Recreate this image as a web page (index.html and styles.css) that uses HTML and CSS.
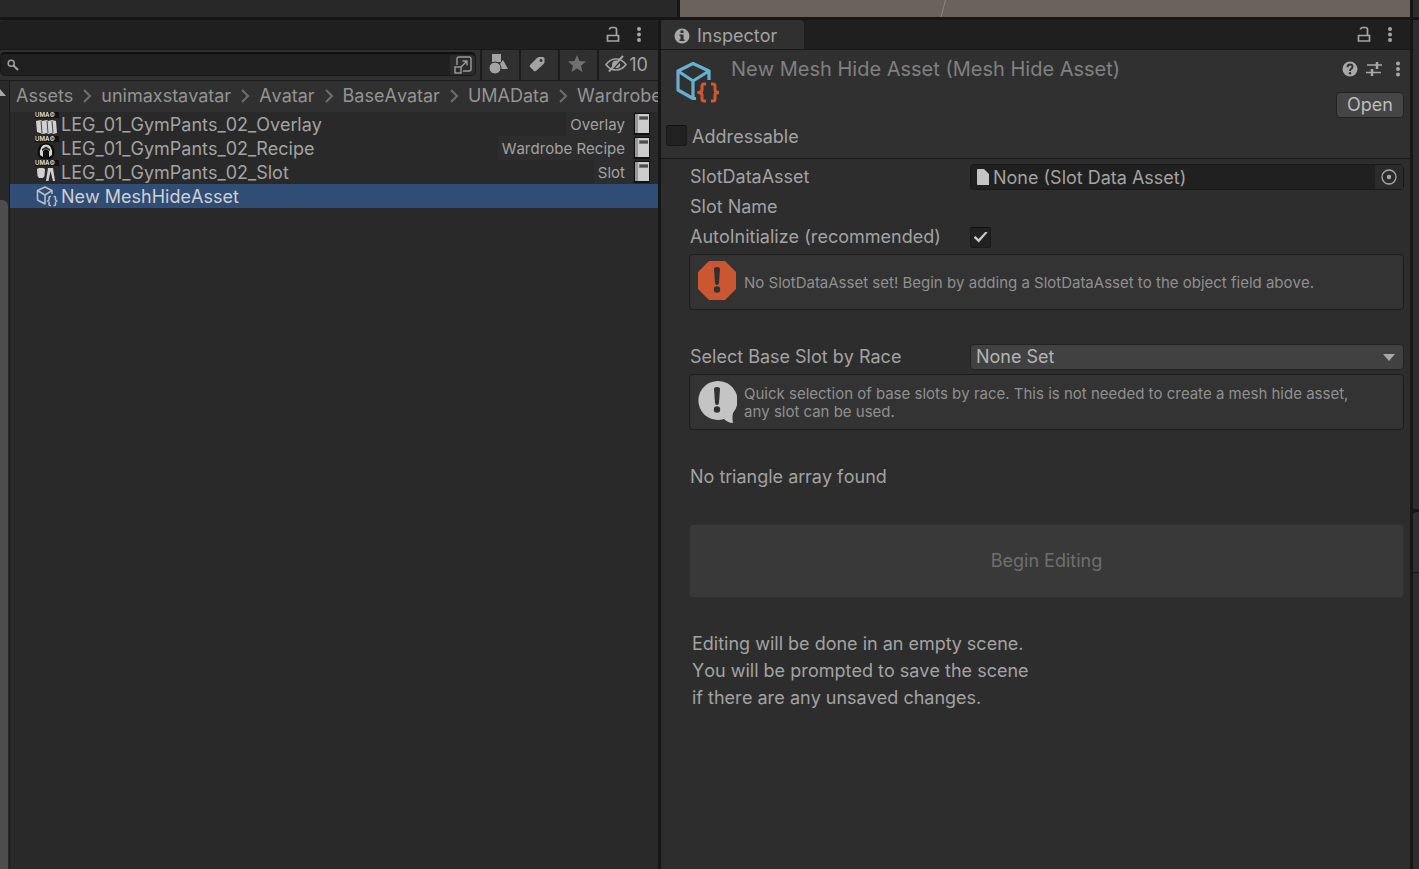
FILE: index.html
```
<!DOCTYPE html>
<html lang="en">
<head>
    <meta charset="UTF-8">
    <meta name="viewport" content="width=device-width, initial-scale=1.0">
    <title>Inspector</title>
    <link rel="stylesheet" href="styles.css">
</head>
<body>
    <div class="editor">
        <!-- Bottom edge of the panels above -->
        <div class="top-strip">
            <div class="top-left"></div>
            <div class="scene-view">
                <svg width="8" height="17" viewBox="0 0 8 17"><path d="M6.500 0L2 17" stroke="#8b8581" fill="none"/></svg>
            </div>
            <div class="top-right"></div>
        </div>

        <div class="panels">
            <!-- Project panel -->
            <section class="project">
                <div class="tab-bar">
                    <button class="icon-button" aria-label="Lock project">
                        <svg width="14" height="18" viewBox="0 0 14 18"><path d="M1.500 9.500h11v5.500h-11zM3.500 3.500V3Q4 1.500 6 1.500h2.500q2 0 2 2v6" fill="none" stroke="#a6a6a6" stroke-width="1.700"/></svg>
                    </button>
                    <button class="icon-button" aria-label="Project menu">
                        <svg width="6" height="18" viewBox="0 0 6 18" fill="#a6a6a6"><circle cx="3" cy="3" r="2"/><circle cx="3" cy="8.500" r="2"/><circle cx="3" cy="14" r="2"/></svg>
                    </button>
                </div>

                <div class="toolbar">
                    <div class="search">
                        <svg width="12" height="12" viewBox="0 0 12 12"><circle cx="4.200" cy="4.200" r="3" fill="none" stroke="#a0a0a0" stroke-width="1.500"/><path d="M6.500 6.500l4.500 4.500" stroke="#a0a0a0" stroke-width="2"/></svg>
                        <input type="text" aria-label="Search assets">
                        <button class="search-open" aria-label="Open in search window">
                            <svg width="18" height="18" viewBox="0 0 18 18" fill="none" stroke="#9c9c9c" stroke-width="1.400"><path d="M3 9V3q0-2 2-2h10q2 0 2 2v10q0 2-2 2H9"/><rect x="1" y="11" width="6" height="6"/><path d="M7 11l6-6M8.500 5H13v4.500"/></svg>
                        </button>
                    </div>
                    <button class="tool" aria-label="Search by type">
                        <svg width="20" height="20" viewBox="0 0 20 20" fill="#a3a3a3"><path d="M3 0h9v8H3zM14 6l5 9h-7l-2-4z"/><circle cx="6" cy="14" r="6" stroke="#2f2f2f"/></svg>
                    </button>
                    <button class="tool" aria-label="Search by label">
                        <svg width="18" height="18" viewBox="0 0 18 18" fill="#a3a3a3"><path fill-rule="evenodd" d="M1 10L8 3q1-1 3-1h3q1.500 0 1.500 1.500V7q0 1-1 2L7 16q-1 .700-2 0L1 12q-.700-1 0-2zM12 4a1.500 1.500 0 1 0 .1 0z"/></svg>
                    </button>
                    <button class="tool" aria-label="Favorites">
                        <svg width="20" height="20" viewBox="0 0 20 20" fill="#707070"><path d="M10 1l2.500 6 6.500.500-5 4.300 1.600 6.200-5.600-3.400L4.400 18 6 11.800 1 7.500 7.500 7z"/></svg>
                    </button>
                    <button class="tool hidden-count" aria-label="Hidden packages: 10">
                        <svg width="22" height="18" viewBox="0 0 22 18" fill="none" stroke="#a3a3a3" stroke-width="1.600"><path d="M1 9.500Q5 4 11 4t10 5.500Q17 15 11 15T1 9.500z"/><path d="M7 9a4 4 0 0 1 6-3l-6 6zM10 13l5-5q1 4-2 5z" fill="#a3a3a3" stroke="none"/><path d="M4 16.500L18 1" stroke-width="2"/></svg>
                        <span>10</span>
                    </button>
                </div>

                <div class="project-body">
                    <div class="tree-scroll">
                        <svg width="6" height="7" viewBox="0 0 6 7"><path d="M0 0l6 7H0z" fill="#a8a8a8"/></svg>
                        <div class="scroll-thumb"></div>
                    </div>
                    <div class="assets">
                        <nav class="breadcrumbs" aria-label="Folder">
                            <a href="#">Assets</a>
                            <svg width="10" height="14" viewBox="0 0 10 14"><path d="M2 1l6 6-6 6"/></svg>
                            <a href="#">unimaxstavatar</a>
                            <svg width="10" height="14" viewBox="0 0 10 14"><path d="M2 1l6 6-6 6"/></svg>
                            <a href="#">Avatar</a>
                            <svg width="10" height="14" viewBox="0 0 10 14"><path d="M2 1l6 6-6 6"/></svg>
                            <a href="#">BaseAvatar</a>
                            <svg width="10" height="14" viewBox="0 0 10 14"><path d="M2 1l6 6-6 6"/></svg>
                            <a href="#">UMAData</a>
                            <svg width="10" height="14" viewBox="0 0 10 14"><path d="M2 1l6 6-6 6"/></svg>
                            <a href="#">Wardrobe</a>
                        </nav>
                        <ul class="asset-list">
                            <li>
                                <svg width="24" height="24" viewBox="0 0 24 24"><rect width="24" height="6" fill="#111"/><text class="uma" x="0" y="5">UMA©</text><path d="M1 9l5-1 1 1 5-1 1 1 4-1 4 1 1 12-4 1-1-1-4 1-1-1-4 1-6-2z" fill="#d0d0d0"/><path d="M6 9l1 12M12 9l1 12M17 9l1 12" stroke="#444" fill="none"/></svg>
                                <span class="name">LEG_01_GymPants_02_Overlay</span>
                                <span class="type">Overlay</span>
                                <svg class="book" width="18" height="24" viewBox="0 0 18 24"><path d="M1 1h16v22H1z" fill="#111"/><path d="M2 2h3v19H2z" fill="#999"/><path d="M5 2h11v19H5z" fill="#ccc"/><path d="M6 4h9v4H6z" fill="#777"/><path d="M7 6h8" stroke="#222"/></svg>
                            </li>
                            <li>
                                <svg width="24" height="24" viewBox="0 0 24 24"><rect width="24" height="6" fill="#111"/><text class="uma" x="0" y="5">UMA©</text><path d="M3 20Q1 8 11 7q10 1 8 13l-3 3H6z" fill="#0c0c0c"/><path d="M5 19Q4 9 11 8.500 18 9 17 19l-3 2v-6l-3-2-3 2v6z" fill="#d5d5d5"/><path d="M7 13l4-2.500 4 2.500v2l-4-2-4 2z" fill="#333"/><path d="M9 16l2-1 2 1v6H9z" fill="#111"/></svg>
                                <span class="name">LEG_01_GymPants_02_Recipe</span>
                                <span class="type">Wardrobe Recipe</span>
                                <svg class="book" width="18" height="24" viewBox="0 0 18 24"><path d="M1 1h16v22H1z" fill="#111"/><path d="M2 2h3v19H2z" fill="#999"/><path d="M5 2h11v19H5z" fill="#ccc"/><path d="M6 4h9v4H6z" fill="#777"/><path d="M7 6h8" stroke="#222"/></svg>
                            </li>
                            <li>
                                <svg width="24" height="24" viewBox="0 0 24 24"><rect width="24" height="6" fill="#111"/><text class="uma" x="0" y="5">UMA©</text><path d="M2 9l2-1h4l2 1-.500 7-1.500 2H4l-1.500-2zM13 8h5l2 13h-2l-2.500-10L13.500 21H11z" fill="#d0d0d0"/></svg>
                                <span class="name">LEG_01_GymPants_02_Slot</span>
                                <span class="type">Slot</span>
                                <svg class="book" width="18" height="24" viewBox="0 0 18 24"><path d="M1 1h16v22H1z" fill="#111"/><path d="M2 2h3v19H2z" fill="#999"/><path d="M5 2h11v19H5z" fill="#ccc"/><path d="M6 4h9v4H6z" fill="#777"/><path d="M7 6h8" stroke="#222"/></svg>
                            </li>
                            <li class="selected">
                                <svg width="24" height="24" viewBox="0 0 24 24" fill="none" stroke="#b9c0cb" stroke-width="1.500" stroke-linejoin="round"><path d="M17 10V6.500L10 3 2.500 6.500v9.500l7.500 4v-9M2.500 6.500L10 11l7-4.500"/><path d="M16 12.500h-1q-1 0-1 1v2.500l-1.500 1 1.500 1v2.500q0 1 1 1h1M18.500 12.500h1q1 0 1 1v2.500l1.500 1-1.500 1v2.500q0 1-1 1h-1"/></svg>
                                <span class="name">New MeshHideAsset</span>
                            </li>
                        </ul>
                    </div>
                </div>
            </section>

            <!-- Inspector panel -->
            <section class="inspector">
                <div class="tab-bar">
                    <button class="tab">
                        <svg width="16" height="16" viewBox="0 0 16 16"><circle cx="8" cy="8" r="7.500" fill="#a8a8a8"/><path d="M6.500 2.500h3v2.500h-3zM5.500 6.500h4v5h1v1.500h-5v-1.500h1V8h-1z" fill="#2f2f2f"/></svg>
                        Inspector
                    </button>
                    <button class="icon-button" aria-label="Lock inspector">
                        <svg width="14" height="18" viewBox="0 0 14 18"><path d="M1.500 9.500h11v5.500h-11zM3.500 3.500V3Q4 1.500 6 1.500h2.500q2 0 2 2v6" fill="none" stroke="#a6a6a6" stroke-width="1.700"/></svg>
                    </button>
                    <button class="icon-button" aria-label="Inspector menu">
                        <svg width="6" height="18" viewBox="0 0 6 18" fill="#a6a6a6"><circle cx="3" cy="3" r="2"/><circle cx="3" cy="8.500" r="2"/><circle cx="3" cy="14" r="2"/></svg>
                    </button>
                </div>

                <header class="asset-header">
                    <div class="asset-title">
                        <svg width="44" height="46" viewBox="0 0 44 46" fill="none" stroke-linejoin="round"><path d="M34 23V14L18 6.500 3 14v19l15 8.500h3M18 41V24M3 14l15 10 16-10" stroke="#67b0d1" stroke-width="3.200"/><path d="M31 27h-2q-2 0-2 2v4q0 2-3.500 2.500 3.500.500 3.500 2.500V42q0 2 2 2h2M36 27h2q2 0 2 2v4q0 2 3.500 2.500-3.500.500-3.500 2.500V42q0 2-2 2h-2" stroke="#d0582f" stroke-width="3"/></svg>
                        <h1>New Mesh Hide Asset (Mesh Hide Asset)</h1>
                        <div class="header-actions">
                            <div class="header-icons">
                                <button class="icon-button" aria-label="Help">
                                    <svg width="16" height="16" viewBox="0 0 16 16"><circle cx="8" cy="8" r="7.500" fill="#a8a8a8"/><path d="M5.500 6.200q0-2.700 2.500-2.700t2.500 2.200Q10.500 7 9 8q-1 .700-1 2" fill="none" stroke="#2f2f2f" stroke-width="1.900"/><circle cx="8" cy="12.300" r="1.200" fill="#2f2f2f"/></svg>
                                </button>
                                <button class="icon-button" aria-label="Presets">
                                    <svg width="16" height="16" viewBox="0 0 16 16" fill="none" stroke="#a8a8a8"><path d="M1 4h9M12 4h4M0 11.500h5M7 11.500h8" stroke-width="1.500"/><path d="M11 1v7M6 8v7" stroke-width="2.500"/></svg>
                                </button>
                                <button class="icon-button" aria-label="Asset menu">
                                    <svg width="6" height="18" viewBox="0 0 6 18" fill="#a6a6a6"><circle cx="3" cy="3.500" r="2"/><circle cx="3" cy="9" r="2"/><circle cx="3" cy="14.500" r="2"/></svg>
                                </button>
                            </div>
                            <button class="open">Open</button>
                        </div>
                    </div>
                    <label class="addressable"><input type="checkbox" class="check">Addressable</label>
                </header>

                <form class="fields">
                    <div class="row">
                        <label for="slotData">SlotDataAsset</label>
                        <div class="object-field">
                            <svg width="12" height="16" viewBox="0 0 12 16"><path d="M1 0h6l5 5v11H1q-1 0-1-1V1q0-1 1-1z" fill="#c4c4c4"/></svg>
                            <input type="text" id="slotData" value="None (Slot Data Asset)" readonly>
                            <button type="button" aria-label="Pick slot data asset">
                                <svg width="16" height="16" viewBox="0 0 16 16"><circle cx="8" cy="8" r="7" fill="none" stroke="#a8a8a8" stroke-width="1.300"/><circle cx="8" cy="8" r="2.200" fill="#a8a8a8"/></svg>
                            </button>
                        </div>
                    </div>
                    <div class="row"><span>Slot Name</span></div>
                    <div class="row">
                        <label for="autoInit">AutoInitialize (recommended)</label>
                        <input type="checkbox" class="check" id="autoInit" checked>
                    </div>
                    <div class="help-box">
                        <svg width="40" height="44" viewBox="0 0 40 44"><path d="M12 1h16l11 11v17L28 40H12L1 29V12z" fill="#cb5732"/><path d="M17 9q0-2 3-2t3 2l-1 14q-.200 2-2 2t-2-2z" fill="#303030"/><circle cx="20" cy="29.500" r="3.200" fill="#303030"/></svg>
                        <p>No SlotDataAsset set! Begin by adding a SlotDataAsset to the object field above.</p>
                    </div>

                    <div class="row spaced">
                        <label for="race">Select Base Slot by Race</label>
                        <div class="select-wrap">
                            <select id="race"><option>None Set</option></select>
                            <svg width="12" height="8" viewBox="0 0 12 8"><path d="M0 0h12L6 7z" fill="#a8a8a8"/></svg>
                        </div>
                    </div>
                    <div class="help-box">
                        <svg width="40" height="44" viewBox="0 0 40 44"><path d="M20 1a19.500 19.500 0 1 0 7 38q4 4 9 4-1-5 0-10a19.500 19.500 0 0 0-16-32z" fill="#c4c4c4"/><path d="M17 9q0-2 3-2t3 2l-1 14q-.200 2-2 2t-2-2z" fill="#303030"/><circle cx="20" cy="29.500" r="3.200" fill="#303030"/></svg>
                        <p>Quick selection of base slots by race. This is not needed to create a mesh hide asset, any slot can be used.</p>
                    </div>

                    <div class="row spaced"><span>No triangle array found</span></div>
                    <button type="button" class="begin" disabled>Begin Editing</button>
                    <p class="note">Editing will be done in an empty scene.<br>You will be prompted to save the scene<br>if there are any unsaved changes.</p>
                </form>
            </section>

            <!-- Edge of the docked panels on the right -->
            <aside class="edge">
                <div class="edge-top"></div>
                <div class="edge-tab"></div>
                <div class="edge-bottom"></div>
            </aside>
        </div>
    </div>
</body>
</html>
```
FILE: styles.css
```
* {
    box-sizing: border-box;
}

body {
    margin: 0;
    background: #161616;
    color: #a3a3a3;
    font-family: Inter, "Liberation Sans", sans-serif;
    font-size: 18px;
    font-kerning: none;
    line-height: 24px;
}

button, input, select {
    font: inherit;
    font-kerning: none;
    color: inherit;
}

button {
    padding: 0;
    border: 0;
    background: none;
}

svg {
    display: block;
    flex: none;
}

.editor {
    min-height: 100vh;
    display: flex;
    flex-direction: column;
    gap: 3px;
}

.top-strip {
    display: flex;
    gap: 3px;
    height: 17px;
}

.top-left {
    flex: 677 1 0;
    background: #282828;
}

.scene-view {
    display: grid;
    grid-template-columns: 259fr 471fr;
    flex: 730 1 0;
    background: #6b625d;
}

.scene-view svg {
    grid-column: 2;
}

.top-right {
    width: 6px;
    background: #2d2d2d;
}

.panels {
    flex: 1;
    display: flex;
    gap: 3px;
}

.project, .inspector {
    display: flex;
    flex-direction: column;
    min-width: 0;
}

.project {
    flex: 658 1 0;
    background: #292929;
}

.inspector {
    flex: 749 1 0;
    background: #2d2d2d;
}

.tab-bar {
    display: flex;
    align-items: center;
    justify-content: flex-end;
    gap: 16px;
    height: 30px;
    padding-right: 17px;
    background: #1f1f1f;
    border-bottom: 1px solid #181818;
    border-radius: 4px 4px 0 0;
}

.project .tab-bar {
    padding-right: 16px;
}

.tab {
    display: flex;
    align-items: center;
    gap: 7px;
    height: 29px;
    margin-right: auto;
    padding: 2px 27px 0 13px;
    background: #303030;
    border-radius: 4px 4px 0 0;
}

/* Project toolbar */
.toolbar {
    display: flex;
    height: 31px;
    background: #303030;
    border-bottom: 1px solid #1c1c1c;
}

.search {
    flex: 1;
    display: flex;
    align-items: center;
    height: 24px;
    margin: 2px 4px 0 0;
    padding-left: 6px;
    background: #202020;
    border: 1px solid #191919;
    border-top: 2px solid #0f0f0f;
    border-radius: 5px;
}

.search input {
    flex: 1;
    min-width: 0;
    height: 20px;
    border: 0;
    background: none;
}

.search-open {
    display: flex;
    padding: 1px 3px 1px 4px;
    background: #2b2b2b;
    border-radius: 0 4px 4px 0;
}

.tool {
    display: flex;
    align-items: center;
    justify-content: center;
    width: 39px;
    padding: 0 4px 3px 0;
    border-left: 2px solid #1c1c1c;
}

.hidden-count {
    width: 61px;
    gap: 2px;
}

.hidden-count span {
    padding-top: 2px;
}

.project-body {
    flex: 1;
    display: flex;
}

.tree-scroll {
    width: 10px;
    display: flex;
    flex-direction: column;
    gap: 104px;
    padding-top: 8px;
    border-right: 1px solid #1b1b1b;
}

.scroll-thumb {
    flex: 1;
    width: 8px;
    background: #4d4d4d;
    border-radius: 0 6px 0 0;
}

.assets {
    flex: 1;
    min-width: 0;
}

.breadcrumbs {
    display: flex;
    align-items: center;
    gap: 9px;
    height: 31px;
    padding: 0 0 2px 6px;
    overflow: hidden;
    background: #303030;
}

.breadcrumbs a {
    color: #949494;
    text-decoration: none;
}

.breadcrumbs path {
    fill: none;
    stroke: #6e6e6e;
    stroke-width: 2;
}

.asset-list {
    margin: 0;
    padding: 0;
    list-style: none;
}

.asset-list li {
    display: flex;
    align-items: center;
    height: 24px;
    padding: 0 7px 0 25px;
}

.asset-list .selected {
    background: #304d76;
    color: #d0d0d0;
}

.name {
    flex: 1;
    padding: 2px 0 0 2px;
}

.type {
    padding: 2px 8px 0 4px;
    background: #2d2d2d;
    font-size: 15px;
    line-height: 22px;
}

.uma {
    fill: #ddd;
    font-size: 6px;
    font-weight: 700;
}

/* Inspector header */
.asset-header {
    height: 109px;
    padding: 7px 6px 0 5px;
    background: #303030;
    border-bottom: 1px solid #191919;
}

.asset-title {
    display: flex;
    align-items: flex-start;
    height: 68px;
    padding-left: 9px;
}

h1 {
    flex: 1;
    margin: 0;
    padding-left: 12px;
    color: #808080;
    font-size: 20px;
    font-weight: 400;
}

.header-actions {
    display: flex;
    flex-direction: column;
    align-items: flex-end;
    gap: 11px;
}

.header-icons {
    display: flex;
    align-items: center;
    gap: 8px;
    height: 24px;
}

.header-icons .icon-button:last-child {
    padding: 0 3px 0 5px;
}

.open {
    height: 26px;
    padding: 0 10px;
    background: #454545;
    border: 1px solid #222;
    border-radius: 4px;
    color: #bdbdbd;
}

.addressable {
    display: flex;
    align-items: flex-start;
    gap: 5px;
}

.check {
    appearance: none;
    display: grid;
    place-items: center;
    width: 21px;
    height: 21px;
    margin: 0;
    background: #212121;
    border: 1px solid #191919;
    border-top-color: #101010;
    border-radius: 3px;
}

.check:checked::before {
    content: "";
    width: 14px;
    height: 11px;
    background: #c8c8c8;
    clip-path: polygon(0 55%, 14% 42%, 36% 68%, 87% 0, 100% 10%, 38% 100%);
}

/* Inspector fields */
.fields {
    display: flex;
    flex-direction: column;
    gap: 4px;
    padding: 5px 6px 0 28px;
}

.row {
    display: grid;
    grid-template-columns: 281px 1fr;
    align-items: center;
    height: 26px;
}

.fields .row > label, .fields .row > span {
    padding-left: 1px;
}

.spaced {
    margin-top: 30px;
}

.object-field {
    display: flex;
    align-items: center;
    height: 26px;
    padding-left: 6px;
    background: #202020;
    border: 1px solid #191919;
    border-radius: 4px;
}

.object-field input {
    flex: 1;
    min-width: 0;
    height: 24px;
    padding: 1px 0 0 4px;
    border: 0;
    background: none;
}

.object-field button {
    display: grid;
    place-items: center;
    width: 28px;
    height: 24px;
    background: #2b2b2b;
}

.help-box {
    display: flex;
    align-items: center;
    gap: 7px;
    min-height: 56px;
    padding: 4px 28px 4px 7px;
    background: #333;
    border: 1px solid #1c1c1c;
    border-radius: 4px;
}

.help-box p {
    margin: 0;
    padding-top: 2px;
    color: #909090;
    font-size: 15px;
    line-height: 18px;
}

.select-wrap {
    position: relative;
}

.select-wrap select {
    appearance: none;
    display: block;
    width: 100%;
    height: 26px;
    padding: 0 24px 0 5px;
    background: #414141;
    border: 1px solid #222;
    border-radius: 4px;
    color: #b5b5b5;
}

.select-wrap svg {
    position: absolute;
    top: 10px;
    right: 9px;
    pointer-events: none;
}

.begin {
    height: 74px;
    margin-top: 30px;
    background: #393939;
    border: 1px solid #303030;
    border-radius: 4px;
    color: #6f6f6f;
}

.note {
    margin: 28px 0 0;
    padding-left: 3px;
    line-height: 27px;
}

.edge {
    display: flex;
    flex-direction: column;
    width: 6px;
}

.edge-top {
    height: 489px;
    margin-bottom: 3px;
    background: #2d2d2d;
}

.edge-tab {
    height: 60px;
    margin-bottom: 1px;
    background: #303030;
    border-radius: 4px 0 0 0;
}

.edge-bottom {
    flex: 1;
    background: #2d2d2d;
}
```
